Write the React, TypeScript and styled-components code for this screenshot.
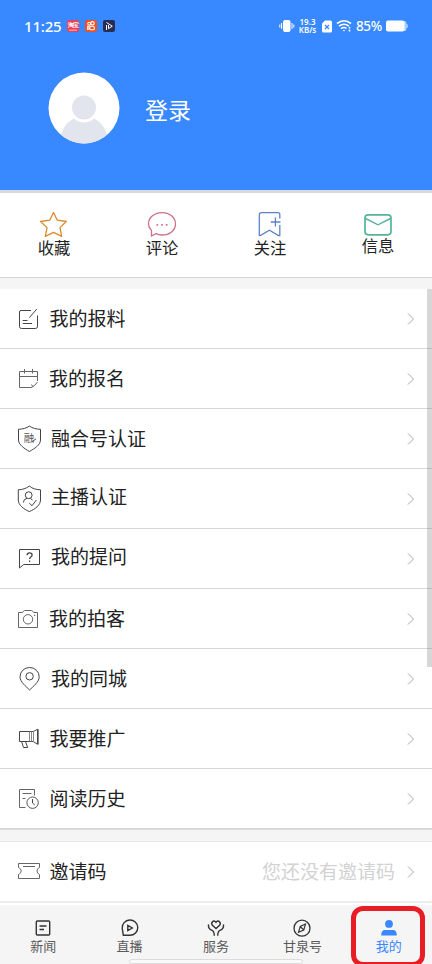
import React from "react";
import styled, { createGlobalStyle } from "styled-components";

const GlobalStyle = createGlobalStyle`
  * { box-sizing: border-box; }
  body { margin: 0; background: #f5f5f5; font-family: "Noto Sans CJK SC", sans-serif; }
  svg { display: block; flex: none; overflow: visible; }
`;

const Screen = styled.div`
  width: 432px;
  height: 964px;
  display: flex;
  flex-direction: column;
  overflow: hidden;
  background: #f5f5f5;
`;

const Header = styled.header`
  height: 193px;
  flex: none;
  background: #3888ff;
  border-bottom: 3px solid #d8d9dc;
`;

const StatusBar = styled.div`
  height: 52px;
  padding: 0 24px;
  display: flex;
  align-items: center;
  color: #fff;
  font-family: "Noto Sans", sans-serif;
`;

const Clock = styled.span`
  width: 43px;
  font-size: 15px;
  font-weight: 500;
  line-height: 20px;
  letter-spacing: -0.2px;
  padding-bottom: 1px;
`;

const AppBadges = styled.div`
  display: flex;
  gap: 6px;
`;

const StatusRight = styled.div`
  display: flex;
  align-items: center;
  margin-left: auto;
`;

const Speed = styled.div`
  width: 19px;
  margin: 0 5px 0 3px;
  display: flex;
  flex-direction: column;
  align-items: center;
  font-size: 8px;
  line-height: 8px;
  font-weight: 600;
  white-space: nowrap;
  padding-bottom: 1px;
`;

const SimIcon = styled.svg`
  margin-right: 1px;
`;

const Percent = styled.span`
  width: 27px;
  margin: 0 3px 0 5px;
  font-size: 13.5px;
  line-height: 18px;
  font-weight: 500;
  letter-spacing: -0.4px;
  white-space: nowrap;
`;

const Profile = styled.div`
  display: flex;
  align-items: center;
  padding: 20px 0 0 48px;
  gap: 25px;
`;

const LoginText = styled.span`
  color: #fff;
  font-size: 23px;
  line-height: 30px;
  margin-top: 1px;
`;

const Shortcuts = styled.nav`
  height: 85px;
  flex: none;
  display: grid;
  grid-template-columns: repeat(4, 1fr);
  background: #fff;
  border-bottom: 1px solid #d6d6d6;
`;

const Shortcut = styled.div<{ $lift?: number }>`
  display: flex;
  flex-direction: column;
  align-items: center;
  padding-top: 17px;
  font-size: 16.3px;
  line-height: 20px;
  color: #222;
  span { margin-top: ${(p) => -1 - (p.$lift ?? 0)}px; }
`;

const Content = styled.div`
  flex: none;
  display: grid;
  margin-top: 11px;
`;

const List = styled.div`
  grid-area: 1 / 1;
  background: #fff;
  border-bottom: 1px solid #dcdcdc;
`;

const Row = styled.div`
  height: 60px;
  display: flex;
  align-items: center;
  padding: 0 17px 0 14px;
  border-bottom: 1px solid #d6d6d6;
`;

const RowIcon = styled.svg`
  width: 32px;
  height: 32px;
  margin-top: 1px;
  fill: none;
  stroke: #444;
  stroke-width: 1;
`;

const RowLabel = styled.span<{ $inset: number; $raise: number }>`
  flex: 1;
  margin-left: ${(p) => p.$inset}px;
  margin-bottom: ${(p) => p.$raise + 1.5}px;
  font-size: 19px;
  line-height: 28px;
  color: #222;
`;

const Hint = styled.span`
  font-size: 19px;
  line-height: 28px;
  color: #d2d2d2;
  margin-right: 12px;
  margin-bottom: 1.5px;
`;

const ScrollThumb = styled.div`
  grid-area: 1 / 1;
  justify-self: end;
  width: 5px;
  height: 378px;
  background: rgba(130, 130, 130, 0.32);
`;

const Invite = styled.div`
  flex: none;
  margin-top: 11px;
  height: 64px;
  background: #fff;
  border-top: 1px solid #e8e8e8;
  ${Row} { border-bottom: 2px solid #eee; height: 61px; }
`;

const TabBar = styled.nav`
  height: 59px;
  flex: none;
  position: relative;
  display: grid;
  grid-template-columns: repeat(5, 1fr);
  background: #f5f5f5;
`;

const Tab = styled.div<{ $active?: boolean }>`
  display: flex;
  flex-direction: column;
  align-items: center;
  padding-top: 11px;
  font-size: 13px;
  line-height: 18px;
  color: ${(p) => (p.$active ? "#3888ff" : "#5a5a5a")};
  svg { margin-bottom: -3px; }
`;

const ActiveFrame = styled.div`
  position: absolute;
  left: 351px;
  top: 1px;
  width: 74px;
  height: 61px;
  border: 5px solid #e81e27;
  border-radius: 12px;
`;

const HomeBar = styled.div`
  position: absolute;
  left: 129px;
  bottom: 0;
  width: 174px;
  height: 5px;
  background: #fafafa;
  border: 1px solid #dcdcdc;
  border-radius: 3px;
`;

const Chevron = () => (
  <svg width="8" height="14" viewBox="0 0 8 14" fill="none" stroke="#aaa">
    <path d="M1 1.5 6.5 7 1 12.5" />
  </svg>
);

const shield = "M15.3 3C12 5.7 8.3 6.6 4.3 6.8V17C4.3 22 9.5 26 15.3 28.6C21.5 26 26.5 22 26.5 17V6.8C22 6.6 18.5 5.7 15.3 3Z";

const rows: { label: string; inset: number; raise: number; icon: React.ReactNode }[] = [
  { label: "我的报料", inset: 3.5, raise: 0, icon: <>
    <path d="M17 7.5H7Q5.5 7.5 5.5 9V23.5Q5.5 25.5 7.5 25.5H21.5Q23.5 25.5 23.5 23.5V12.5M22.8 6 15.3 14.7M8.7 17.5H13.5M8.7 20.5H18" />
  </> },
  { label: "我的报名", inset: 3, raise: 0, icon: <>
    <path stroke="#666" d="M23.5 18V8.5H5.5V24.5H17Q20 24 23.5 19M5.5 13.5H23.5M10.5 6V10.5M18.5 6V10.5M17.5 21.5 19 24" />
  </> },
  { label: "融合号认证", inset: 5, raise: 0, icon: <>
    <path d="M15.4 3C12.5 5.2 8.5 6.2 4.5 6.3V17C4.5 22 10.5 25.5 15.4 28.5C20.5 25.5 26.5 22 26.5 17V6.3C22.3 6.2 18.3 5.2 15.4 3Z" />
    <text x="15.1" y="18.5" fontSize="10.5" fill="#555" stroke="none" textAnchor="middle">融</text>
    <path d="M18.5 18.5 22 15.8" />
  </> },
  { label: "主播认证", inset: 5, raise: 3, icon: <>
    <path d={shield} /><circle cx="14.7" cy="12.2" r="3.4" />
    <path d="M9.3 19.5Q9.7 15.7 13 15.4M16.3 15.3 18.5 17M15.3 20.2 18 22.7 22.4 17" />
  </> },
  { label: "我的提问", inset: 5, raise: 3, icon: <>
    <path d="M5.5 25V6.5H25.5V21.5H9.7L5.5 25Z" />
    <path strokeWidth="1.3" d="M13.1 12.2Q13.1 9.8 15.6 9.8Q18.1 9.8 18.1 12Q18.1 13.3 16.8 14Q15.6 14.8 15.6 16.1M15.6 17.5V19" />
  </> },
  { label: "我的拍客", inset: 3, raise: 0, icon: <>
    <path stroke="#666" d="M4.5 9.5H8.2Q9 9.5 9.3 8.5Q9.6 7.5 10.5 7.5H17.5Q18.5 7.5 18.9 8.5Q19.2 9.5 20 9.5H23.5V24.5H4.5Z" />
    <circle cx="14" cy="16.3" r="4.7" stroke="#666" /><circle cx="20.7" cy="12.3" r=".3" />
  </> },
  { label: "我的同城", inset: 5, raise: 0, icon: <>
    <path d="M15.6 27C12 23.3 6 19 6 13.8A9.6 9.3 0 0 1 25.2 13.8C25.2 19 19.2 23.3 15.6 27Z" />
    <circle cx="15.6" cy="13.3" r="3.7" />
  </> },
  { label: "我要推广", inset: 3.5, raise: 0, icon: <>
    <path d="M19.3 8.5H5.5V18.5H19.3M19.3 8.5 23.5 6.3V21.3L19.3 18.5" />
    <path stroke="#888" d="M15.5 8.5V18.5M17.5 8.5V18.5M19.5 8.5V18.5M24.5 6V21.5" />
    <path d="M7.7 18.8 9.5 24.5H13.7L11.6 18.8" />
  </> },
  { label: "阅读历史", inset: 3.5, raise: 0, icon: <>
    <path stroke="#666" d="M11.5 24.5H5.5V6.5H20.5V12.5M8.5 10.5H17.5M8.5 15.5H11.5" />
    <circle cx="18.6" cy="19.7" r="5.7" stroke="#555" /><path d="M18.5 16V20L20.7 22" />
  </> },
];

export default function App() {
  return (
    <Screen>
      <GlobalStyle />
      <Header>
        <StatusBar>
          <Clock>11:25</Clock>
          <AppBadges>
            <svg width="12" height="12" viewBox="0 0 12 12">
              <rect width="12" height="12" rx="2" fill="#ee4056" />
              <text x="6" y="7" fontSize="6" fontWeight="700" fill="#fff" textAnchor="middle" textLength="11">淘宝</text>
              <path d="M2 10.2H10" stroke="#ffb7bf" />
            </svg>
            <svg width="12" height="12" viewBox="0 0 12 12" fill="none" stroke="#fff" strokeWidth="1.1">
              <rect width="12" height="12" rx="2" fill="#f05022" stroke="none" />
              <circle cx="4.2" cy="3.7" r="1.4" /><circle cx="7.5" cy="3.3" r="1.7" />
              <rect x="4.8" y="6.2" width="4.5" height="3.6" rx="1" /><path d="M4.8 7.2 2.7 6.3V9.5L4.8 8.6" />
            </svg>
            <svg width="12" height="12" viewBox="0 0 12 12" fill="none" stroke="#fff" strokeWidth="1">
              <rect width="12" height="12" rx="2" fill="#292d55" stroke="none" />
              <path d="M3.5 5V10M3.5 2.5 9.3 6.2 5.5 8.6V5" />
            </svg>
          </AppBadges>
          <StatusRight>
            <svg width="16" height="14" viewBox="0 0 16 14" stroke="#fff" fill="#fff">
              <rect x="4.5" y="1.5" width="6.5" height="11" rx="1.2" />
              <path d="M2.6 4V10M.8 5.5V8.5M13 4V10M14.8 5.5V8.5" />
            </svg>
            <Speed><span>19.3</span><span>KB/s</span></Speed>
            <SimIcon width="10" height="13" viewBox="0 0 10 13">
              <path d="M3 .5H8.5Q10 .5 10 2V11Q10 12.5 8.5 12.5H1.5Q0 12.5 0 11V3.5Z" fill="#fff" />
              <path d="M3 5 7 9M7 5 3 9" stroke="#3888ff" strokeWidth="1.3" />
            </SimIcon>
            <svg width="18" height="14" viewBox="0 0 18 14" fill="none" stroke="#fff" strokeWidth="1.6">
              <path d="M4 4.5Q11 -1 18 4.5M6 7.2Q11 3.3 16 7.2M8 9.7Q11 7.5 13.5 9.5" />
              <circle cx="11" cy="11.6" r=".8" fill="#fff" stroke="none" /><path d="M16.5 8V9.5M16.5 10.5V12.5" />
            </svg>
            <Percent>85%</Percent>
            <svg width="22" height="12" viewBox="0 0 22 12">
              <path d="M18 1H19Q20.5 1 20.5 3.5Q22 4 22 6Q22 8 20.5 8.5Q20.5 11 19 11H18Z" fill="#a9cbff" />
              <rect x="0" y=".5" width="18.5" height="11" rx="2" fill="#fff" />
            </svg>
          </StatusRight>
        </StatusBar>
        <Profile>
          <svg width="72" height="72" viewBox="0 0 72 72">
            <clipPath id="avatar"><circle cx="36" cy="36" r="35.5" /></clipPath>
            <circle cx="36" cy="36" r="35.5" fill="#fff" />
            <g clipPath="url(#avatar)" fill="#e2e5ed">
              <ellipse cx="36" cy="70" rx="24" ry="26" />
              <circle cx="36" cy="35.5" r="15" fill="#fff" />
              <circle cx="36" cy="35.5" r="12" />
            </g>
          </svg>
          <LoginText>登录</LoginText>
        </Profile>
      </Header>
      <Shortcuts>
        <Shortcut>
          <svg width="30" height="28" viewBox="0 0 30 28" fill="none" stroke="#d98a2f" strokeWidth="1.3" strokeLinejoin="round">
            <path d="M14.5 2.5 18.3 10.2 27.3 11.5 21 17.6 22.7 26.3 14.5 22.3 6.3 26.3 8 17.6 1.5 11.5 10.7 10.2Z" />
          </svg>
          <span>收藏</span>
        </Shortcut>
        <Shortcut>
          <svg width="30" height="28" viewBox="0 0 30 28" fill="none" stroke="#ca7187" strokeWidth="1.3">
            <path d="M4.5 26V20.4C2.4 18.3 1.5 16.4 1.5 14C1.5 7.5 7.5 2.6 15 2.6S28.5 7.5 28.5 14S22.5 25 15 25Q11.5 25 9 23.7Z" />
            <path d="M9.5 14.8H11.1M14.2 14.8H15.8M18.9 14.8H20.5" strokeWidth="1.7" />
          </svg>
          <span>评论</span>
        </Shortcut>
        <Shortcut>
          <svg width="30" height="28" viewBox="0 0 30 28" fill="none" stroke="#5b83cc" strokeWidth="1.3">
            <path d="M24.8 8.5V4.5Q24.8 2.7 23 2.7H6.5Q4.3 2.7 4.3 5V25.5L5.6 25.3 14.5 20.3 23.4 25.5H24.8V15M15.8 12H25.5M20.4 7.5V16.5" />
          </svg>
          <span>关注</span>
        </Shortcut>
        <Shortcut $lift={2}>
          <svg width="30" height="28" viewBox="0 0 30 28" fill="none" stroke="#55b39c" strokeWidth="1.7">
            <rect x="2" y="4.8" width="26" height="20" rx="3.2" />
            <path d="M2.5 8.5 15 14.8 27.5 8.5" strokeWidth="1.4" />
          </svg>
          <span>信息</span>
        </Shortcut>
      </Shortcuts>
      <Content>
        <List>
          {rows.map((r) => (
            <Row key={r.label}>
              <RowIcon viewBox="0 0 32 32">{r.icon}</RowIcon>
              <RowLabel $inset={r.inset} $raise={r.raise}>{r.label}</RowLabel>
              <Chevron />
            </Row>
          ))}
        </List>
        <ScrollThumb />
      </Content>
      <Invite>
        <Row>
          <RowIcon viewBox="0 0 32 32">
            <path stroke="#666" d="M4.5 7.5H25.5V11.5C22.3 13 22.3 17 25.5 18.5V22.5H4.5V18.5C8 17 8 13 4.5 11.5ZM9 10.5H21" />
          </RowIcon>
          <RowLabel $inset={3.5} $raise={0}>邀请码</RowLabel>
          <Hint>您还没有邀请码</Hint>
          <Chevron />
        </Row>
      </Invite>
      <TabBar>
        <Tab>
          <svg width="20" height="24" viewBox="0 0 20 24" fill="none" stroke="#333" strokeWidth="1.4">
            <rect x="3.3" y="5" width="13.4" height="14" rx="1" /><path d="M6.5 10H13.5M6.5 13.5H11" />
          </svg>
          新闻
        </Tab>
        <Tab>
          <svg width="20" height="24" viewBox="0 0 20 24" fill="none" stroke="#333" strokeWidth="1.4">
            <path d="M3.3 19.2 2.2 12.2A7.8 7.6 0 1 1 10 19.2ZM7.8 9.4V14.6L12.3 12Z" />
          </svg>
          直播
        </Tab>
        <Tab>
          <svg width="20" height="24" viewBox="0 0 20 24" fill="none" stroke="#333" strokeWidth="1.4">
            <path d="M10 12.5 6.4 9.2C4.5 7 7.5 3 10 6.3C12.5 3 15.5 7 13.6 9.2ZM2.5 8.3Q2 12.8 6 14.3Q8.3 15.3 8.3 19.8M17.5 8.3Q18 12.8 14 14.3Q11.7 15.3 11.7 19.8" />
          </svg>
          服务
        </Tab>
        <Tab>
          <svg width="20" height="24" viewBox="0 0 20 24" fill="none" stroke="#333" strokeWidth="1.3">
            <circle cx="10" cy="12.2" r="8" /><path d="M13.5 8 11.8 14 6.5 16.3 8.2 10.5ZM8.2 10.5 11.8 14" strokeWidth="1.1" />
          </svg>
          甘泉号
        </Tab>
        <Tab $active>
          <svg width="20" height="24" viewBox="0 0 20 24" fill="#3888ff">
            <circle cx="10" cy="7.9" r="3.9" /><path d="M2.2 19.5Q2.2 14 6 14H14Q17.8 14 17.8 19.5Z" />
          </svg>
          我的
        </Tab>
        <HomeBar />
        <ActiveFrame />
      </TabBar>
    </Screen>
  );
}
